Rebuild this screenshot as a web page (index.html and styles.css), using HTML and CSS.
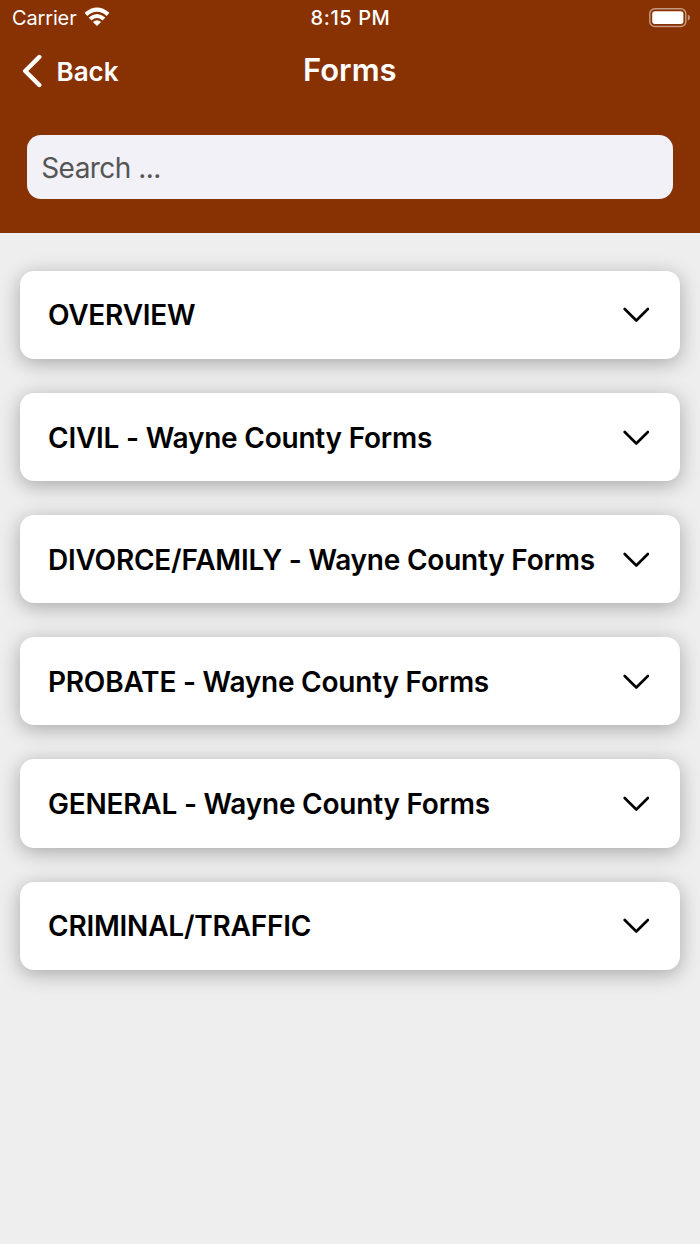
FILE: index.html
```html
<!DOCTYPE html>
<html lang="en">
<head>
  <meta charset="utf-8">
  <title>Forms</title>
  <link rel="stylesheet" href="styles.css">
</head>
<body>
  <header class="header">
    <div class="status-bar">
      <div class="carrier">
        <span>Carrier</span>
        <svg class="wifi" viewBox="0 0 26 20" width="26" height="20">
          <path d="M0.6 5.8 Q13 -4.6 25.4 5.8 L22.7 8.9 Q13 0.6 3.3 8.9 Z"/>
          <path d="M4.6 10.5 Q13 3.3 21.4 10.5 L18.5 13.4 Q13 8.7 7.5 13.4 Z"/>
          <path d="M8.9 15 Q13 11.5 17.1 15 L13 19 Z"/>
        </svg>
      </div>
      <span class="time">8:15 PM</span>
      <svg class="battery" viewBox="0 0 42 20" width="42" height="20">
        <rect class="battery-case" x="0.8" y="0.8" width="36" height="17.6" rx="5"/>
        <rect x="3.2" y="3.3" width="31.2" height="12.6" rx="2.6"/>
        <path class="battery-tip" d="M38.8 6.4 Q41 7.4 41 9.6 Q41 11.8 38.8 12.8 Z"/>
      </svg>
    </div>
    <nav class="nav">
      <a class="back" href="#">
        <svg class="back-arrow" viewBox="0 0 20 34" width="20" height="34">
          <path d="M17.3 3 L3.2 17 L17.3 31"/>
        </svg>
        <span>Back</span>
      </a>
      <h1 class="title">Forms</h1>
    </nav>
    <input class="search" type="text" placeholder="Search ...">
  </header>

  <main class="list">
    <div class="card">
      <span>OVERVIEW</span>
      <svg class="chevron" viewBox="0 0 26 16" width="26" height="16"><path d="M1.7 2 L13.3 13.5 L24.9 2"/></svg>
    </div>
    <div class="card">
      <span>CIVIL - Wayne County Forms</span>
      <svg class="chevron" viewBox="0 0 26 16" width="26" height="16"><path d="M1.7 2 L13.3 13.5 L24.9 2"/></svg>
    </div>
    <div class="card">
      <span>DIVORCE/FAMILY - Wayne County Forms</span>
      <svg class="chevron" viewBox="0 0 26 16" width="26" height="16"><path d="M1.7 2 L13.3 13.5 L24.9 2"/></svg>
    </div>
    <div class="card">
      <span>PROBATE - Wayne County Forms</span>
      <svg class="chevron" viewBox="0 0 26 16" width="26" height="16"><path d="M1.7 2 L13.3 13.5 L24.9 2"/></svg>
    </div>
    <div class="card">
      <span>GENERAL - Wayne County Forms</span>
      <svg class="chevron" viewBox="0 0 26 16" width="26" height="16"><path d="M1.7 2 L13.3 13.5 L24.9 2"/></svg>
    </div>
    <div class="card">
      <span>CRIMINAL/TRAFFIC</span>
      <svg class="chevron" viewBox="0 0 26 16" width="26" height="16"><path d="M1.7 2 L13.3 13.5 L24.9 2"/></svg>
    </div>
  </main>
</body>
</html>
```
FILE: styles.css
```css
* {
  box-sizing: border-box;
}
body {
  margin: 0;
  min-height: 1244px;
  background-color: #eeeeee;
  font-family: Inter, "Liberation Sans", sans-serif;
}
.header {
  height: 233.4px;
  background-color: #883102;
  color: #fff;
}
.status-bar {
  display: grid;
  grid-template-columns: 1fr auto 1fr;
  align-items: center;
  height: 36px;
  padding: 0 9px 0 12px;
  font-size: 20px;
}
.carrier {
  display: flex;
  align-items: center;
  gap: 7px;
  letter-spacing: -0.15px;
}
.wifi {
  margin-top: -2px;
  fill: #fff;
}
.time {
  font-weight: 500;
  letter-spacing: 0.6px;
  margin-left: -2px;
}
.battery {
  justify-self: end;
  margin-top: -1px;
  fill: #fff;
}
.battery-case {
  fill: none;
  stroke: #c3997f;
  stroke-width: 1.5;
}
.battery-tip {
  fill: #c3997f;
}
.nav {
  display: grid;
  grid-template-columns: 1fr auto 1fr;
  align-items: center;
  height: 70px;
  padding: 0 22px 0 21.5px;
}
.back {
  display: flex;
  align-items: center;
  gap: 15px;
  color: #fff;
  font-size: 26px;
  font-weight: 600;
  text-decoration: none;
}
.back-arrow {
  fill: none;
  stroke: #fff;
  stroke-width: 4.4;
  stroke-linecap: round;
  stroke-linejoin: round;
}
.title {
  margin: 0 0 4px;
  font-size: 31px;
  font-weight: 600;
}
.search {
  display: block;
  width: 645.6px;
  height: 64px;
  margin: 29.4px auto 0;
  padding: 2px 14px 0;
  border: none;
  border-radius: 14px;
  background-color: #f2f1f7;
  font-family: inherit;
  font-size: 28px;
  letter-spacing: -0.55px;
}
.search::placeholder {
  color: #555;
}
.list {
  display: flex;
  flex-direction: column;
  gap: 34px;
  padding: 37.2px 20.4px;
}
.card {
  display: flex;
  align-items: center;
  justify-content: space-between;
  height: 88.2px;
  padding: 1.6px 30.2px 0 27.6px;
  border-radius: 14px;
  background-color: #fff;
  box-shadow: 0 4px 20px rgba(0, 0, 0, 0.3);
  color: #000;
  font-size: 28px;
  font-weight: 600;
  letter-spacing: -0.22px;
  white-space: nowrap;
}
.chevron {
  fill: none;
  stroke: #000;
  stroke-width: 2.6;
  stroke-linecap: round;
  stroke-linejoin: round;
}
```
